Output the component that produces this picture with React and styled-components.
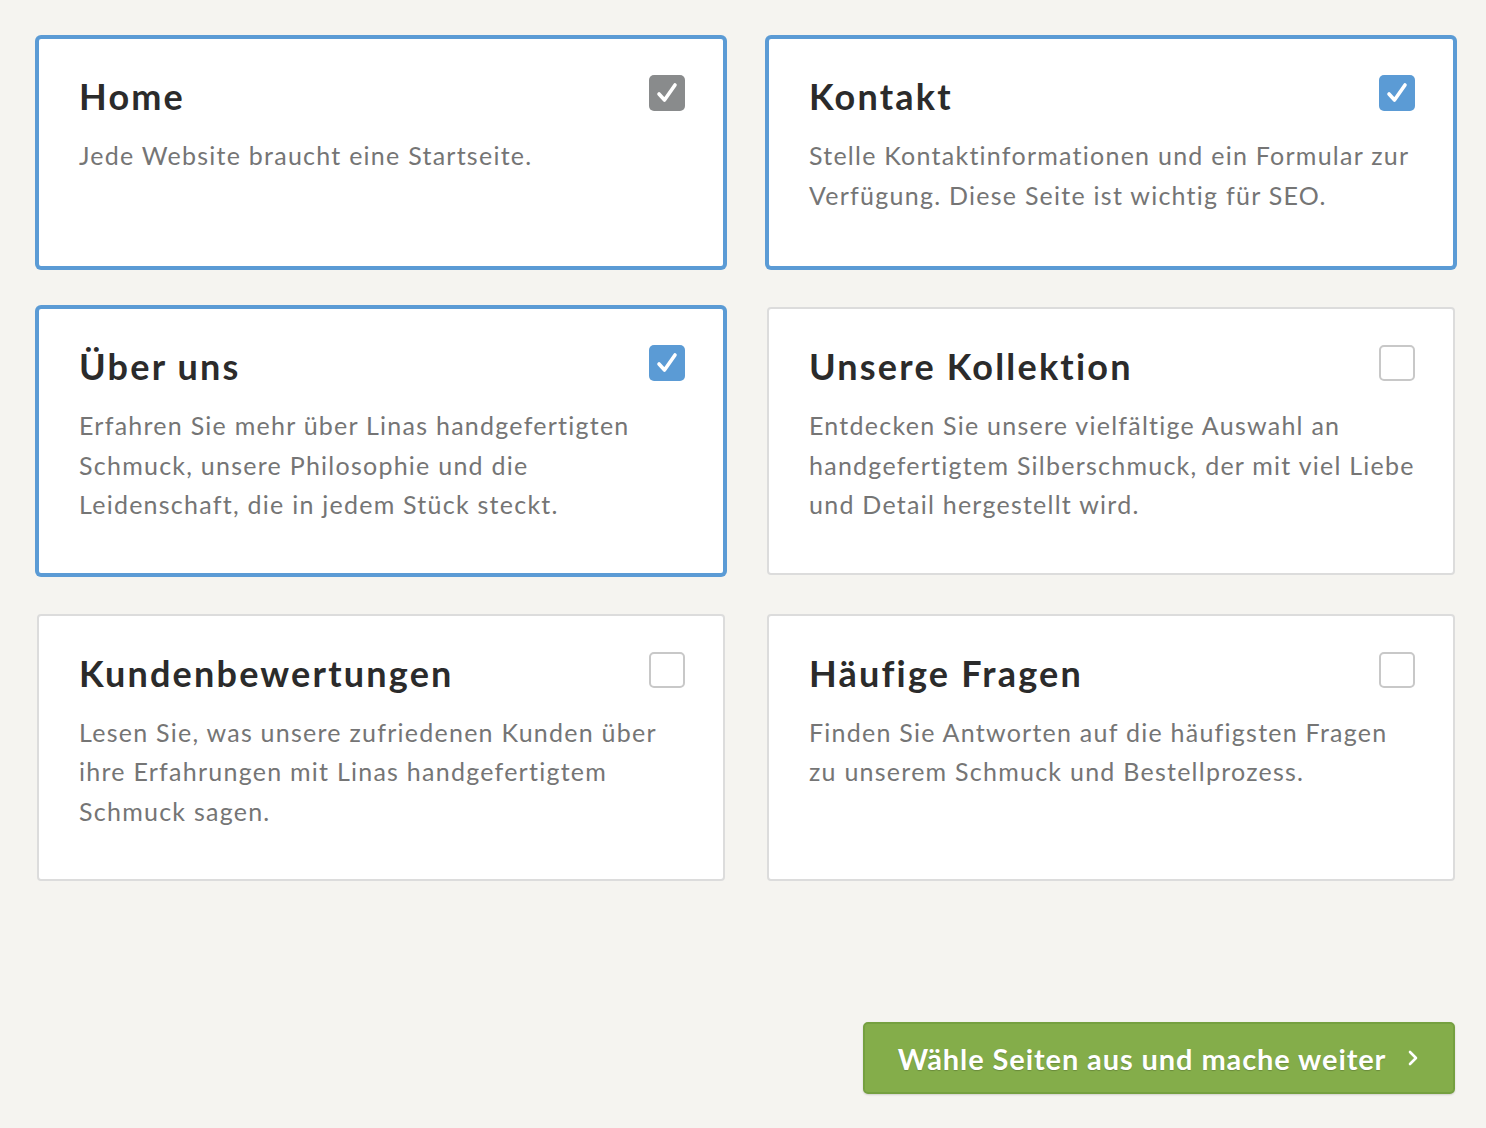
import React, { useState } from "react";
import styled, { createGlobalStyle } from "styled-components";

const Global = createGlobalStyle`
  body { margin: 0; background: #f5f4f0; font-family: Lato, "Open Sans", sans-serif; }
`;

const Page = styled.div`
  padding: 37px 31px 26px 37px;
  display: flex;
  flex-direction: column;
`;

const Grid = styled.div`
  display: grid;
  grid-template-columns: 1fr 1fr;
  column-gap: 42px;
  row-gap: 39px;
`;

const Card = styled.div`
  background: #fff;
  border: 2px solid ${p => (p.$on ? "#5b9bd5" : "#dcdcdc")};
  box-shadow: ${p => (p.$on ? "0 0 0 2px #5b9bd5" : "none")};
  border-radius: 4px;
  padding: 33px 38px 48px 40px;
  cursor: pointer;
  min-height: 146px;
`;

const Head = styled.div`
  display: flex;
  align-items: center;
  justify-content: space-between;
`;

const Title = styled.h2`
  margin: 0;
  font-size: 36px;
  line-height: 48px;
  font-weight: 700;
  color: #2b2b2b;
  letter-spacing: 2.2px;
`;

const Box = styled.div`
  width: 36px;
  height: 36px;
  box-sizing: border-box;
  border-radius: 5px;
  margin-top: -6px;
  background: ${p => (p.$state === "grey" ? "#898b8c" : p.$state === "blue" ? "#5b9bd5" : "#fff")};
  border: ${p => (p.$state === "off" ? "2px solid #c8c8c8" : "none")};
  display: flex;
  align-items: center;
  justify-content: center;
`;

const Desc = styled.p`
  margin: 16px 0 0;
  font-size: 25px;
  line-height: 39.5px;
  letter-spacing: 1.25px;
  color: #757575;
`;

const Footer = styled.div`
  display: flex;
  justify-content: flex-end;
  margin-top: 141px;
`;

const Button = styled.button`
  width: 592px;
  height: 72px;
  background: #84ad4a;
  border: 2px solid #75a040;
  border-radius: 5px;
  color: #fff;
  font-family: Lato, sans-serif;
  font-weight: 700;
  font-size: 29px;
  letter-spacing: 0.9px;
  display: flex;
  align-items: center;
  justify-content: center;
  gap: 20px;
  box-shadow: 0 1px 2px rgba(0,0,0,0.15);
  text-shadow: 0 1px 1px rgba(0,0,0,0.2);
`;

const Check = () => (
  <svg width="26" height="26" viewBox="0 0 26 26">
    <path d="M5 14 L10.5 20 L21 5" fill="none" stroke="#fff" strokeWidth="3.6" strokeLinecap="round" strokeLinejoin="round" />
  </svg>
);

const items = [
  { t: "Home", d: "Jede Website braucht eine Startseite.", s: "grey" },
  { t: "Kontakt", d: "Stelle Kontaktinformationen und ein Formular zur Verfügung. Diese Seite ist wichtig für SEO.", s: "blue" },
  { t: "Über uns", d: "Erfahren Sie mehr über Linas handgefertigten Schmuck, unsere Philosophie und die Leidenschaft, die in jedem Stück steckt.", s: "blue" },
  { t: "Unsere Kollektion", d: "Entdecken Sie unsere vielfältige Auswahl an handgefertigtem Silberschmuck, der mit viel Liebe und Detail hergestellt wird.", s: "off" },
  { t: "Kundenbewertungen", d: "Lesen Sie, was unsere zufriedenen Kunden über ihre Erfahrungen mit Linas handgefertigtem Schmuck sagen.", s: "off" },
  { t: "Häufige Fragen", d: "Finden Sie Antworten auf die häufigsten Fragen zu unserem Schmuck und Bestellprozess.", s: "off" },
];

export default function App() {
  const [state, setState] = useState(items.map(i => i.s));
  const toggle = i => setState(s => s.map((v, j) => (j === i ? (v === "off" ? "blue" : "off") : v)));
  return (
    <Page>
      <Global />
      <Grid>
        {items.map((it, i) => (
          <Card key={it.t} $on={state[i] !== "off"} onClick={() => toggle(i)}>
            <Head>
              <Title>{it.t}</Title>
              <Box $state={state[i]}>{state[i] !== "off" && <Check />}</Box>
            </Head>
            <Desc>{it.d}</Desc>
          </Card>
        ))}
      </Grid>
      <Footer>
        <Button>
          Wähle Seiten aus und mache weiter
          <svg width="14" height="20" viewBox="0 0 14 20">
            <path d="M4 4 L10 10 L4 16" fill="none" stroke="#fff" strokeWidth="2.6" strokeLinecap="round" strokeLinejoin="round" />
          </svg>
        </Button>
      </Footer>
    </Page>
  );
}
